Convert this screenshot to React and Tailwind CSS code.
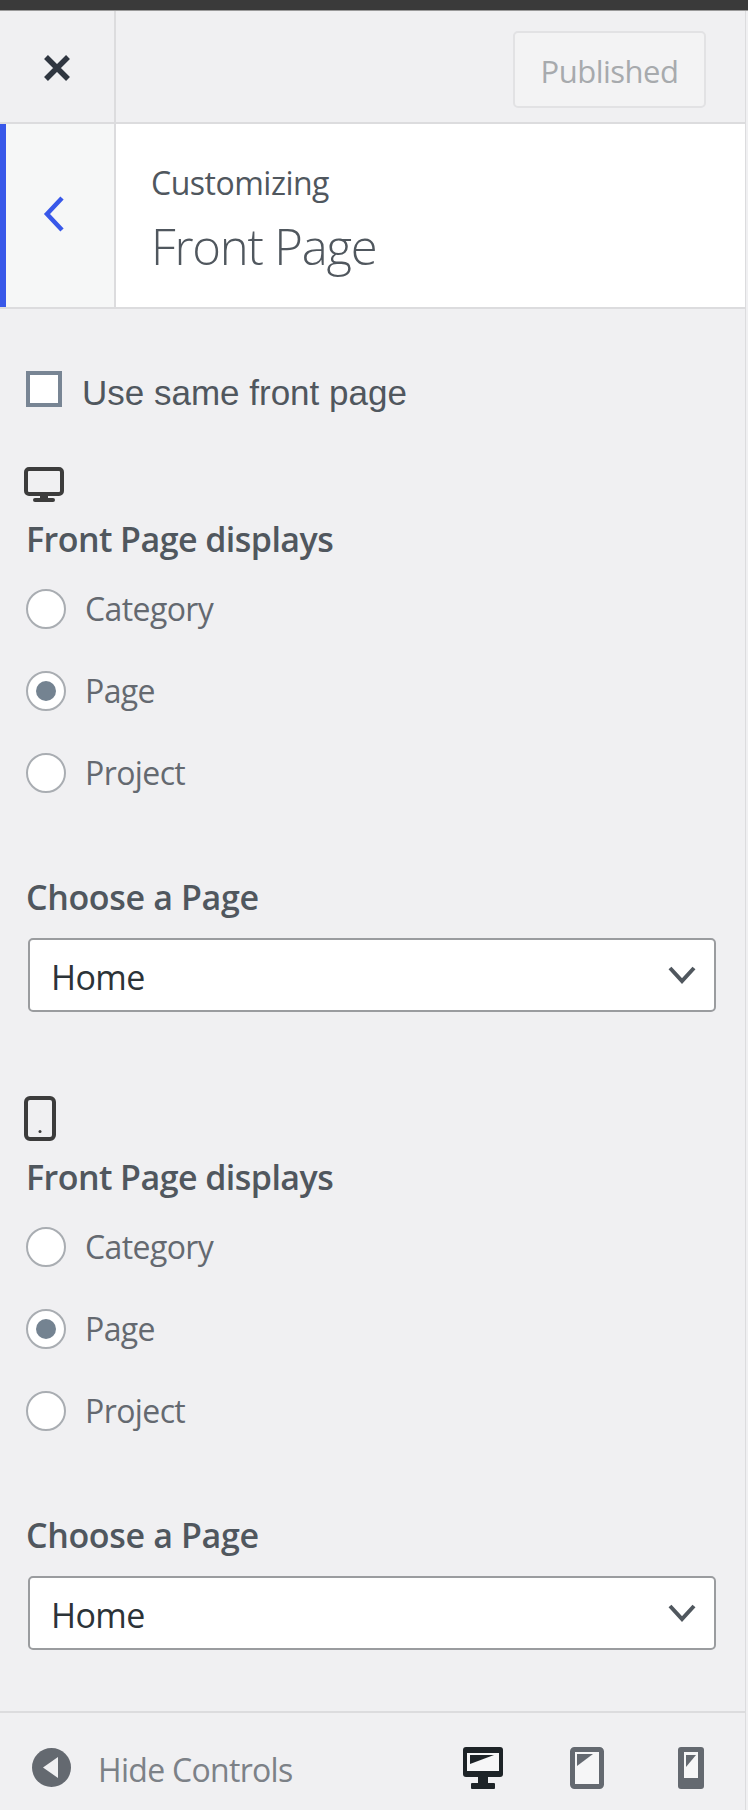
import React from 'react';

const sans = "font-['Open_Sans','Noto_Sans',sans-serif]";

const MonitorIcon = () => (
    <svg width="40" height="36" viewBox="0 0 40 36" className="block">
        <rect x="2" y="2" width="36" height="25" rx="3" fill="none" stroke="#3c3c3c" strokeWidth="4" />
        <rect x="16" y="28" width="8" height="4" fill="#3c3c3c" />
        <rect x="9" y="31" width="22" height="4" rx="2" fill="#3c3c3c" />
    </svg>
);

const PhoneIcon = () => (
    <svg width="32" height="45" viewBox="0 0 32 45" className="block">
        <rect x="2" y="2" width="28" height="41" rx="4" fill="none" stroke="#3c3c3c" strokeWidth="4" />
        <rect x="14.5" y="34" width="3" height="3" rx="1.5" fill="#3c3c3c" />
    </svg>
);

const Radio = ({ label, checked }) => (
    <div className="flex items-center h-10 mb-[42px] ml-[2px]">
        <span className="w-10 h-10 rounded-full bg-white border-2 border-[#a9adb2] flex items-center justify-center shrink-0">
            {checked && <span className="w-5 h-5 rounded-full bg-[#748391]"></span>}
        </span>
        <span className={`ml-[19px] text-[32px] leading-10 tracking-[-0.6px] text-[#646970] ${sans}`}>{label}</span>
    </div>
);

const FrontPageGroup = ({ icon }) => (
    <div>
        {icon}
        <h3 className={`mt-[14px] ml-[2px] text-[34px] leading-[44px] font-semibold tracking-[-0.55px] text-[#50575e] ${sans}`}>Front Page displays</h3>
        <div className="mt-[28px]">
            <Radio label="Category" />
            <Radio label="Page" checked />
            <Radio label="Project" />
        </div>
        <h3 className={`mt-[82px] ml-[2px] text-[34px] leading-[44px] font-semibold tracking-[-0.35px] text-[#50575e] ${sans}`}>Choose a Page</h3>
        <div className="mt-[19px] ml-[4px] w-[688px] h-[74px] bg-white border-2 border-[#9a9c9f] rounded-[5px] flex items-center justify-between pl-[21px] pr-[17px]">
            <span className={`pt-[3px] text-[34px] leading-none tracking-[-0.6px] text-[#2c3338] ${sans}`}>Home</span>
            <svg width="30" height="20" viewBox="0 0 30 20">
                <path d="M3 3 L15 16 L27 3" fill="none" stroke="#50575e" strokeWidth="4" />
            </svg>
        </div>
    </div>
);

export default function App() {
    return (
        <div className="w-[748px] h-[1810px] flex flex-col bg-[#f0f0f2] overflow-hidden">
            <div className="h-[11px] shrink-0 bg-[#3a3a3a] border-b border-[#9a9a9a]"></div>

            <div className="flex-1 w-[746px] flex flex-col border-r border-[#dcdcde]">
                {/* header */}
                <div className="h-[113px] shrink-0 flex border-b-2 border-[#dcdcde]">
                    <div className="w-[116px] border-r-2 border-[#dcdcde] flex items-center justify-center pt-[2px]">
                        <svg width="30" height="30" viewBox="0 0 30 30">
                            <path d="M4 4 L26 26 M26 4 L4 26" stroke="#2f3640" strokeWidth="5.5" />
                        </svg>
                    </div>
                    <div className="flex-1 flex items-center justify-end pr-[39px] pt-[6px]">
                        <div className="w-[193px] h-[77px] rounded-[5px] border-2 border-[#e2e2e4] bg-[#f3f3f4] flex items-center justify-center">
                            <span className={`pt-[3px] text-[31px] tracking-[-0.5px] text-[#a7aaad] ${sans}`}>Published</span>
                        </div>
                    </div>
                </div>

                {/* section title */}
                <div className="h-[185px] shrink-0 flex border-b-2 border-[#dcdcde]">
                    <div className="w-[116px] bg-[#f6f7f7] border-l-[6px] border-l-[#3858e9] border-r-2 border-r-[#dcdcde] flex items-center justify-center">
                        <svg width="24" height="38" viewBox="0 0 24 38" className="-ml-[13px] mb-[3px]">
                            <path d="M20 3 L5 19 L20 35" fill="none" stroke="#3858e9" strokeWidth="4.5" />
                        </svg>
                    </div>
                    <div className="flex-1 bg-white pl-[35px] pt-[39px]">
                        <div className={`text-[32px] leading-10 tracking-[-0.5px] text-[#50575e] ${sans}`}>Customizing</div>
                        <div className={`mt-[13px] text-[49px] leading-[60px] font-light tracking-[-1.2px] text-[#50575e] ${sans}`}>Front Page</div>
                    </div>
                </div>

                {/* controls */}
                <div className="flex-1 pl-[24px] pt-[62px]">
                    <label className="flex items-start h-9 ml-[2px]">
                        <span className="w-9 h-9 bg-white border-4 border-[#788594] shrink-0"></span>
                        <span className="ml-5 mt-[4px] font-['Liberation_Sans',Arial,sans-serif] text-[35px] leading-9 text-[#50575e]">Use same front page</span>
                    </label>
                    <div className="mt-[60px]">
                        <FrontPageGroup icon={<MonitorIcon />} />
                    </div>
                    <div className="mt-[84px]">
                        <FrontPageGroup icon={<PhoneIcon />} />
                    </div>
                </div>

                {/* footer */}
                <div className="h-[99px] shrink-0 border-t-2 border-[#dcdcde] flex items-center pl-[32px] pr-[41px] pt-[12px]">
                    <svg width="39" height="39" viewBox="0 0 39 39">
                        <circle cx="19.5" cy="19.5" r="19.5" fill="#646970" />
                        <path d="M26 9 L11 19.5 L26 30 Z" fill="#f0f0f2" />
                    </svg>
                    <span className={`ml-[27px] mt-[5px] text-[32px] tracking-[-0.7px] text-[#7c8187] ${sans}`}>Hide Controls</span>
                    <div className="ml-auto flex items-center">
                        <svg width="40" height="42" viewBox="0 0 40 42">
                            <rect width="40" height="30" rx="3" fill="#1d2327" />
                            <rect x="4" y="6" width="32" height="18" fill="#f6f6f7" />
                            <path d="M7 8 H31 L7 17 Z" fill="#1d2327" />
                            <rect x="15" y="30" width="10" height="7" fill="#1d2327" />
                            <rect x="8" y="36" width="24" height="6" rx="1" fill="#1d2327" />
                        </svg>
                        <svg width="34" height="42" viewBox="0 0 34 42" className="ml-[67px]">
                            <rect x="2.5" y="2.5" width="29" height="37" rx="2" fill="#f6f6f7" stroke="#646970" strokeWidth="5" />
                            <path d="M7 7 H23 L7 19 Z" fill="#646970" />
                        </svg>
                        <svg width="26" height="42" viewBox="0 0 26 42" className="ml-[74px]">
                            <rect width="26" height="42" rx="3" fill="#646970" />
                            <rect x="6" y="5" width="14" height="26" fill="#f6f6f7" />
                            <path d="M8 8 H18 L8 20 Z" fill="#646970" />
                        </svg>
                    </div>
                </div>
            </div>
        </div>
    );
}
